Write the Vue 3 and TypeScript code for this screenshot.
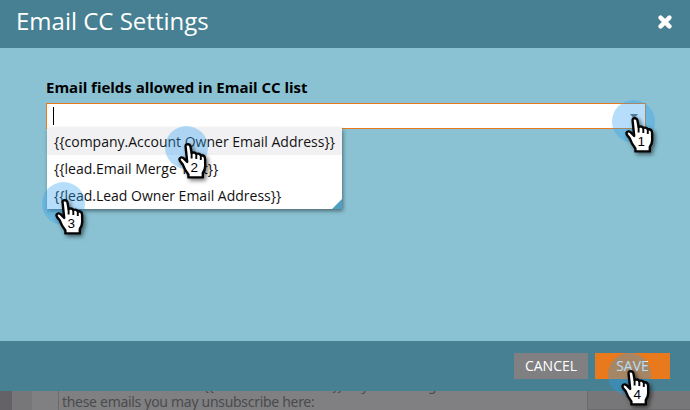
<script setup lang="ts">
interface Marker { n: number; x: number; y: number }

const fields: string[] = [
  '{{company.Account Owner Email Address}}',
  '{{lead.Email Merge Test}}',
  '{{lead.Lead Owner Email Address}}',
]

const mailLines: string[] = [
  'This email was sent to {{lead.Email Address}}. If you no longer wish',
  'these emails you may unsubscribe here:',
]

const markers: Marker[] = [
  { n: 1, x: 612, y: 100 },
  { n: 2, x: 165, y: 126 },
  { n: 3, x: 42, y: 182 },
  { n: 4, x: 608, y: 353 },
]
</script>

<template>
  <div class="screen">
    <header class="head">
      <h1>Email CC Settings</h1>
      <svg class="close" width="14" height="14" viewBox="0 0 14 14">
        <path d="M2.6 2.6 11.4 11.4M11.4 2.6 2.6 11.4" stroke="#fff" stroke-width="4.4" stroke-linecap="round" />
      </svg>
    </header>
    <main class="body">
      <label class="label">Email fields allowed in Email CC list</label>
      <div class="combo">
        <span class="caret"></span>
        <svg class="arrow" width="8" height="5" viewBox="0 0 8 5"><path d="M0 0H8L4 5Z" fill="#666" /></svg>
        <ul class="menu">
          <li v-for="(f, i) in fields" :key="f" :class="{ active: i === 0 }"><span>{{ f }}</span></li>
          <svg class="grip" width="10" height="10" viewBox="0 0 10 10"><path d="M10 0V10H0Z" fill="#4f9fc0" /></svg>
        </ul>
      </div>
    </main>
    <footer class="foot">
      <button class="btn cancel">CANCEL</button>
      <button class="btn save">SAVE</button>
    </footer>
    <div class="page">
      <div class="rail"></div>
      <div class="gutter"></div>
      <div class="margin"></div>
      <div class="mail">
        <p v-for="line in mailLines" :key="line">{{ line }}</p>
      </div>
      <div class="rest"></div>
    </div>

    <svg
      v-for="m in markers" :key="m.n" class="marker" width="56" height="66" viewBox="0 0 56 66"
      :style="{ left: m.x + 'px', top: m.y + 'px' }"
    >
      <circle cx="21.5" cy="21.5" r="21.5" fill="#2da0f0" fill-opacity=".35" />
      <g class="hand">
        <path
          d="M20.6 20.8Q20.3 18.2 22.7 18.2Q25 18.2 25.5 20.6L26.6 27Q30 25.6 31.2 28Q34.4 26.8 35.8 29.4Q39.9 28.8 40.1 33L40.2 40Q40.2 44 37.8 47V51.4H23.4V48.5Q19.2 43 17.6 38.2Q14.4 35 14.4 33Q15.8 30 18.8 32.4L22.2 36Z"
          fill="#fff" stroke="#050505" stroke-width="2.4" stroke-linejoin="round"
        />
        <path d="M26.6 26.6V32.4M31.3 28V33M35.8 29.6V34" fill="none" stroke="#050505" stroke-width="1.9" />
      </g>
      <text x="29.3" y="46" text-anchor="middle">{{ m.n }}</text>
    </svg>
  </div>
</template>

<style>
body { margin: 0; }
</style>

<style scoped>
.screen {
  position: relative; width: 690px; height: 410px; overflow: hidden;
  display: flex; flex-direction: column; background: #808082;
  font-family: "Open Sans", "Noto Sans", sans-serif;
}
.head {
  height: 48px; flex: none; box-sizing: border-box; padding: 0 18px 5px 16px;
  display: flex; align-items: center; justify-content: space-between; background: #468092;
}
h1 { margin: 0; padding-bottom: 2px; font-size: 24px; line-height: 32px; font-weight: 400; color: #fff; }
.close { display: block; }
.body { height: 293px; flex: none; box-sizing: border-box; padding: 29px 44px 0 46px; background: #8ac2d3; }
.label { display: block; height: 26px; line-height: 20px; font-size: 15px; font-weight: 700; letter-spacing: -.02px; color: #000; }
.combo {
  position: relative; box-sizing: border-box; height: 26px; border: 1px solid #e87a1d; background: #fff;
  display: flex; align-items: center; justify-content: space-between; padding: 0 7px 0 6px;
}
.caret { width: 1px; height: 18px; background: #000; }
.arrow { display: block; }
.menu {
  position: absolute; left: 0; top: 24px; width: 295px; margin: 0; padding: 0; list-style: none;
  background: #fff; box-shadow: 1px 2px 4px rgba(0, 0, 0, .45);
}
.menu li { height: 27px; line-height: 27px; padding-left: 7px; font-size: 14px; color: #111; white-space: nowrap; }
.menu .active { background: #f1f1f4; }
.grip { position: absolute; right: 0; bottom: 0; }
.foot {
  height: 50px; flex: none; box-sizing: border-box; padding: 12px 20px 0 0;
  display: flex; justify-content: flex-end; gap: 7px; background: #468092;
}
.btn {
  height: 26px; padding: 0; border: 0; color: #fff; font-family: inherit; font-size: 14px; line-height: 26px;
}
.cancel { width: 74px; background: #808082; }
.save { width: 75px; background: #e8791c; }
.page { height: 19px; display: flex; overflow: hidden; }
.rail { width: 12px; background: #646167; }
.gutter { width: 20px; background: #777779; }
.margin { width: 26px; background: #808082; }
.mail {
  box-sizing: border-box; width: 530px; height: 19px; padding-left: 3px;
  border-left: 1px solid #6b6b6e; border-right: 1px solid #6b6b6e;
  display: flex; flex-direction: column; justify-content: flex-end; color: #4b4b4e;
  font-family: "Noto Sans", sans-serif; font-size: 14px; line-height: 17px; letter-spacing: -.3px;
}
.mail p { margin: 0; white-space: pre; }
.rest { flex: 1; background: #777779; border-bottom: 1px solid #6b6b6e; }
.marker { position: absolute; overflow: visible; pointer-events: none; }
.hand { filter: drop-shadow(2px 2px 2px rgba(0, 0, 0, .55)); }
.marker text { font-family: "Liberation Sans", Arial, sans-serif; font-size: 13.5px; fill: #000; }
</style>
